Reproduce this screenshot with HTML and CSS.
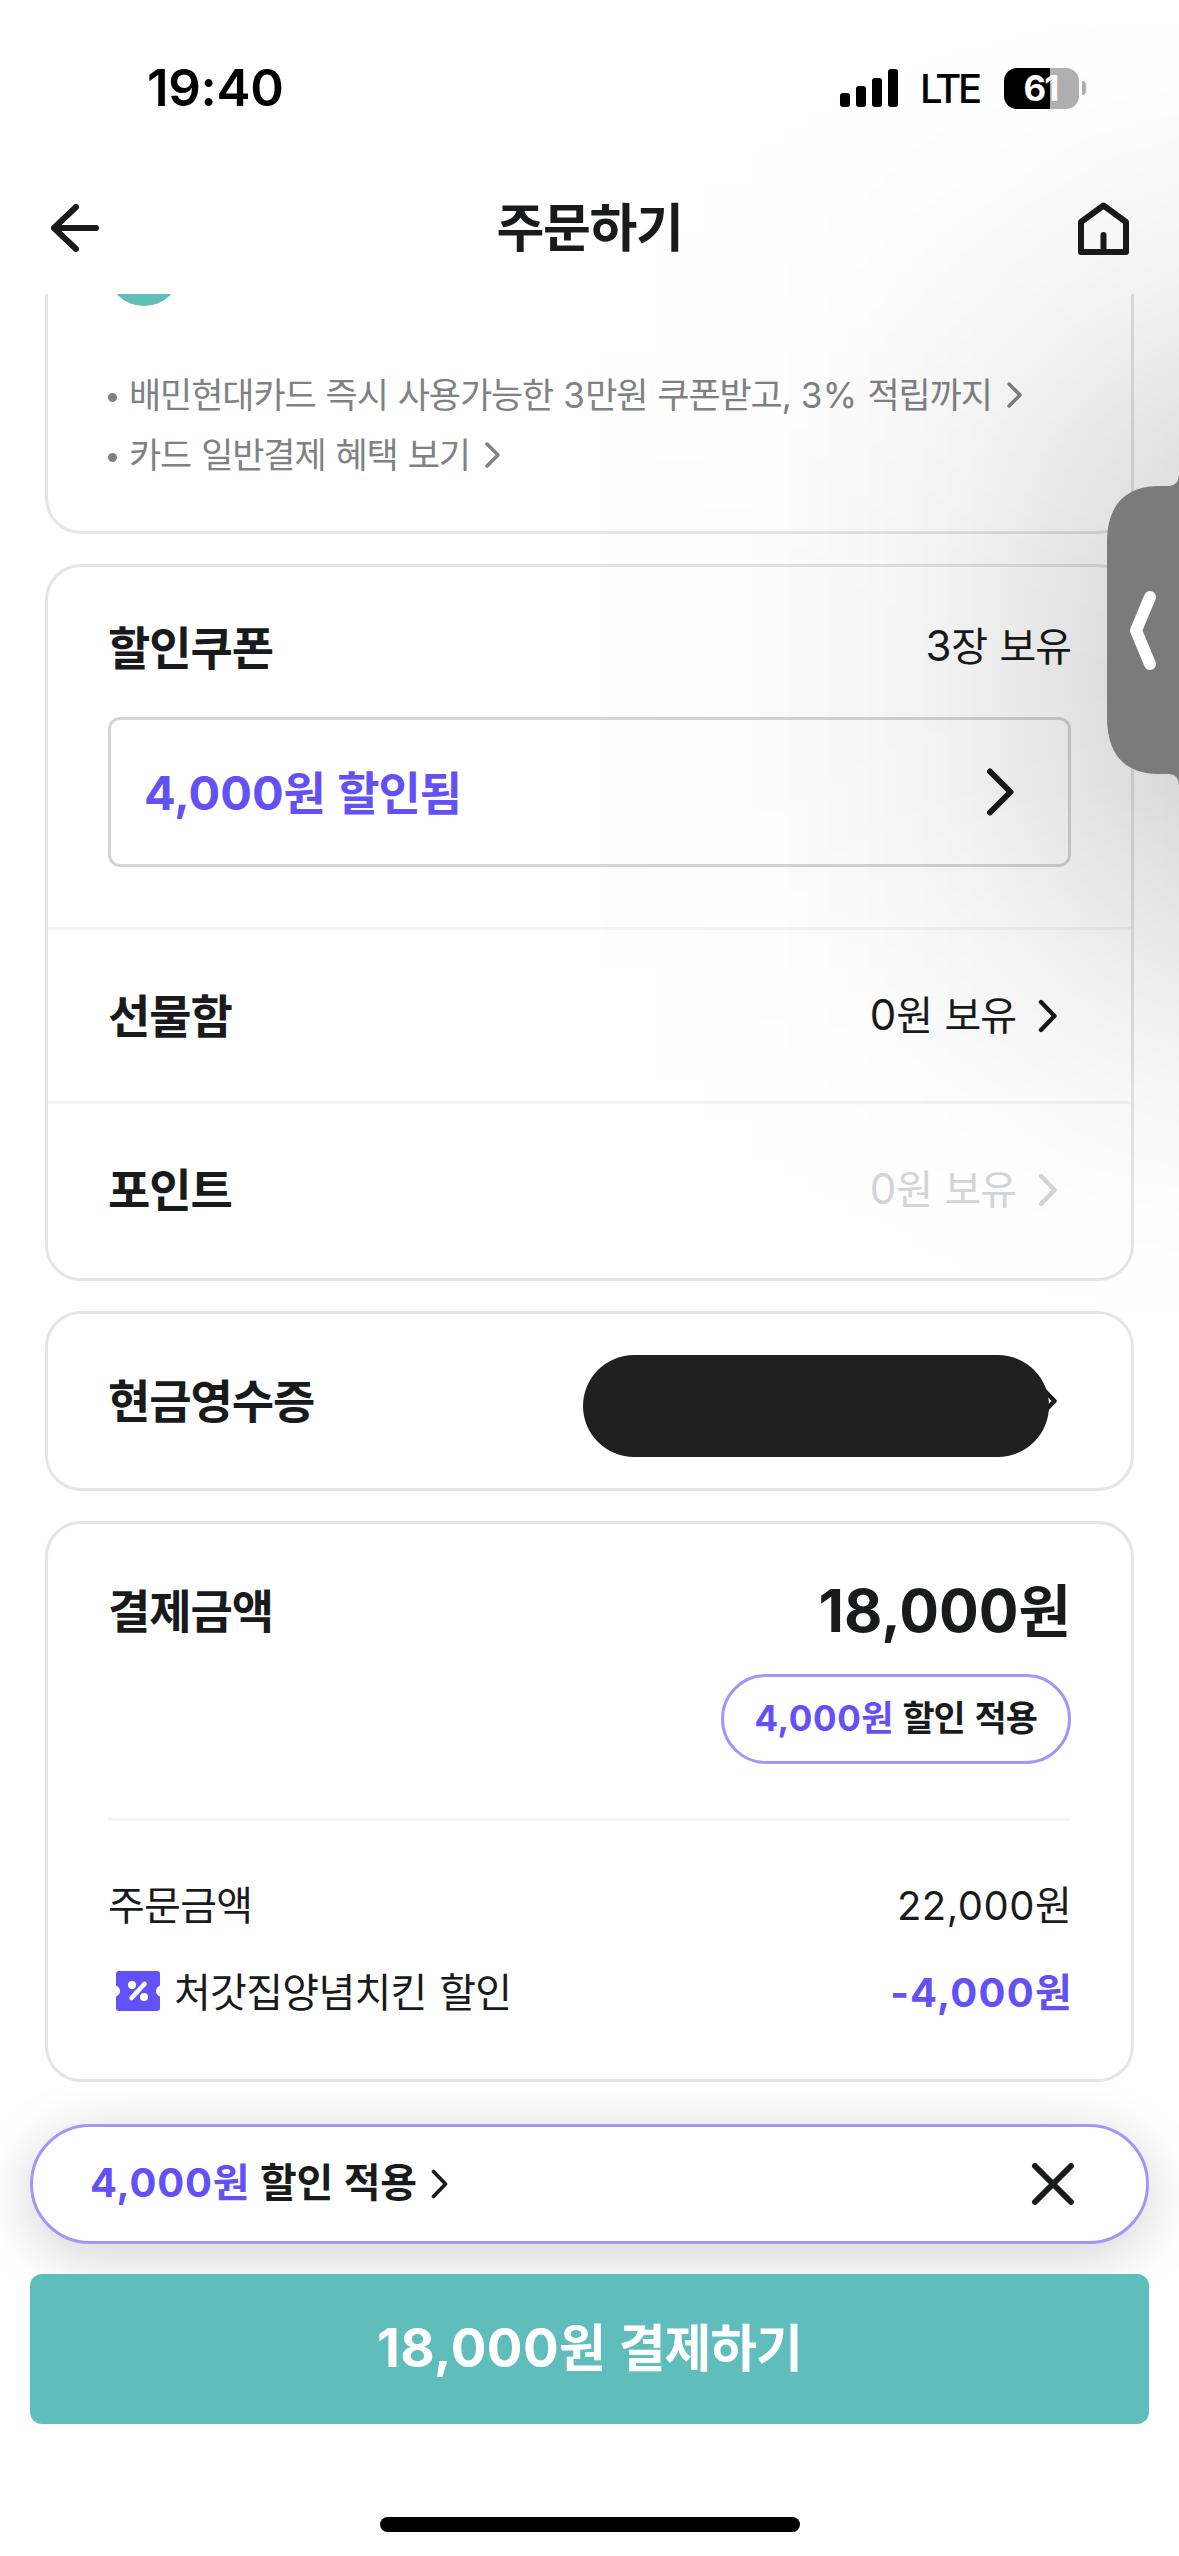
FILE: index.html
```html
<!DOCTYPE html>
<html lang="ko">
<head>
<meta charset="utf-8">
<title>주문하기</title>
<link rel="stylesheet" href="styles.css">
</head>
<body>
<div class="screen">
  <div class="status">
    <span class="status-time">19:40</span>
    <div class="status-right">
      <svg class="signal" width="58" height="38" viewBox="0 0 58 38"><rect x="0" y="24" width="10" height="14" rx="3"/><rect x="16" y="17" width="10" height="21" rx="3"/><rect x="32" y="9" width="10" height="29" rx="3"/><rect x="48" y="0" width="10" height="38" rx="3"/></svg>
      <span class="network">LTE</span>
      <div class="battery"><span class="battery-body">61</span><span class="battery-cap"></span></div>
    </div>
  </div>
  <header class="header">
    <svg width="60" height="60" viewBox="0 0 60 60" class="line-icon"><path d="M31 9 9 30 31 51M9 30H51"/></svg>
    <h1 class="title">주문하기</h1>
    <svg width="60" height="60" viewBox="0 0 60 60" class="line-icon house"><path d="M7 24 29.500 7.500 52 24V54H7ZM29.500 37V53"/></svg>
  </header>

  <main class="content">
    <section class="card card-method">
      <span class="radio-dot"></span>
      <ul class="notes">
        <li><span class="note-text">배민현대카드 즉시 사용가능한 <span class="num">3</span>만원 쿠폰받고, <span class="num">3%</span> 적립까지</span><svg width="16" height="26" viewBox="0 0 16 26"><path d="M2 2 13 13 2 24"/></svg></li>
        <li><span class="note-text">카드 일반결제 혜택 보기</span><svg width="16" height="26" viewBox="0 0 16 26"><path d="M2 2 13 13 2 24"/></svg></li>
      </ul>
    </section>

    <section class="card card-benefit">
      <div class="coupon">
        <div class="coupon-head"><h2 class="label">할인쿠폰</h2><span class="value"><span class="num">3</span>장 보유</span></div>
        <div class="coupon-box"><span class="coupon-text"><span class="num">4,000</span>원 할인됨</span><svg width="30" height="48" viewBox="0 0 30 48"><path d="M4 3.500 24.500 24 4 44.500"/></svg></div>
      </div>
      <div class="row"><h2 class="label">선물함</h2><span class="value"><span class="num">0</span>원 보유</span><svg class="chev" width="20" height="34" viewBox="0 0 20 34"><path d="M3 3 16.500 17 3 31"/></svg></div>
      <div class="row muted"><h2 class="label">포인트</h2><span class="value"><span class="num">0</span>원 보유</span><svg class="chev" width="20" height="34" viewBox="0 0 20 34"><path d="M3 3 16.500 17 3 31"/></svg></div>
    </section>

    <section class="card card-receipt">
      <div class="row"><h2 class="label">현금영수증</h2><svg class="chev" width="20" height="34" viewBox="0 0 20 34"><path d="M3 3 16.500 17 3 31"/></svg></div>
      <span class="redaction"></span>
    </section>

    <section class="card card-total">
      <div class="total-head"><h2 class="label">결제금액</h2><span class="total"><span class="num">18,000</span>원</span></div>
      <div class="badge"><span class="accent"><span class="num">4,000</span>원</span> 할인 적용</div>
      <div class="divider"></div>
      <div class="line"><span class="line-name">주문금액</span><span class="line-price"><span class="num">22,000</span>원</span></div>
      <div class="line line-discount">
        <svg class="ticket" width="44" height="40" viewBox="0 0 44 40"><path class="ticket-body" d="M3 0H41a3 3 0 0 1 3 3V14.500q-4 2-4 5.500t4 5.500V37a3 3 0 0 1-3 3H3a3 3 0 0 1-3-3V25.500q4-2 4-5.500T0 14.500V3A3 3 0 0 1 3 0Z"/><path class="ticket-slash" d="M15.500 27 28.500 13"/><circle cx="16" cy="14" r="4"/><circle cx="28" cy="26" r="4"/></svg>
        <span class="line-name">처갓집양념치킨 할인</span><span class="line-price accent"><span class="num">-4,000</span>원</span>
      </div>
    </section>
  </main>

  <footer class="footer">
    <div class="toast"><span class="toast-text"><span class="accent"><span class="num">4,000</span>원</span> 할인 적용</span><svg class="toast-chev" width="18" height="30" viewBox="0 0 18 30"><path d="M2.500 2.500 14.500 15 2.500 27.500"/></svg><svg class="close" width="44" height="44" viewBox="0 0 44 44"><path d="M4 4 40 40M40 4 4 40"/></svg></div>
    <div class="pay"><span class="pay-text"><span class="num">18,000</span>원 결제하기</span></div>
    <div class="home-bar"></div>
  </footer>

  <div class="glow"></div>
  <svg class="handle" width="72" height="310" viewBox="0 0 72 310"><path class="handle-body" d="M72 0Q71 11 62 11H50C18 12 0 30 0 68V242C0 280 18 298 50 299H62Q71 299 72 310Z"/><path class="handle-arrow" d="M43 122 29 155.500 43 189"/></svg>
</div>
</body>
</html>
```
FILE: styles.css
```css
* { box-sizing: border-box; }
body { margin: 0; background: #fff; }
h1, h2, ul { margin: 0; padding: 0; font-weight: 600; list-style: none; }
svg { flex: none; display: block; fill: none; stroke: currentColor; stroke-linecap: round; stroke-linejoin: round; }

.screen {
  position: relative;
  width: 1179px;
  height: 2556px;
  overflow: hidden;
  display: flex;
  flex-direction: column;
  background: #fff;
  color: #191a1c;
  font-family: "Inter", "Noto Sans CJK KR", sans-serif;
  white-space: nowrap;
}

.status {
  height: 168px;
  padding: 8px 93px 0 147px;
  display: flex;
  align-items: center;
  justify-content: space-between;
  color: #000;
}
.status-time { font-size: 51px; font-weight: 600; line-height: 60px; letter-spacing: -0.3px; }
.status-right { display: flex; align-items: center; }
.signal { fill: #000; stroke: none; }
.network { width: 60px; margin-left: 22px; font-size: 40px; font-weight: 500; line-height: 50px; letter-spacing: -3.5px; padding-top: 2px; }
.battery { margin-left: 24px; display: flex; align-items: center; gap: 3px; }
.battery-body {
  width: 75px; height: 41px; border-radius: 13px;
  background: linear-gradient(90deg, #000 61%, #b1b1b1 61%);
  color: #fff; font-size: 35px; font-weight: 700; line-height: 41px; text-align: center; letter-spacing: -2px; padding-right: 2px;
}
.battery-cap { width: 4px; height: 14px; border-radius: 0 4px 4px 0; background: #b1b1b1; }

.header {
  height: 126px;
  padding: 0 45px 6px;
  display: flex;
  align-items: center;
  justify-content: space-between;
}
.line-icon { stroke-width: 6; }
.title { font-size: 52px; line-height: 60px; letter-spacing: -1.4px; padding-top: 2px; }

.content {
  height: 1800px;
  padding: 0 45px;
  overflow: hidden;
  display: flex;
  flex-direction: column;
  gap: 30px;
}
.card { flex: none; position: relative; border: 3px solid #e4e5e6; border-radius: 36px; }

.card-method { height: 240px; border-top: 0; border-radius: 0 0 36px 36px; overflow: hidden; color: #808183; }
.radio-dot { display: block; width: 74px; height: 74px; margin: -62px 0 0 59px; border-radius: 50%; background: #5fbebb; }
.notes { padding: 59px 0 0 60px; font-weight: 400; font-size: 35px; line-height: 60px; letter-spacing: -1.1px; word-spacing: 1.2px; }
.notes .num { letter-spacing: 0.4px; }
.notes li { display: flex; align-items: center; }
.notes li::before { content: ""; width: 9px; height: 9px; margin: 5px 12px 0 0; border-radius: 50%; background: #808183; }
.notes svg { margin-left: 15px; stroke-width: 3.500; }

.card-benefit { height: 717px; }
.coupon { height: 360px; padding: 51px 60px 0; }
.coupon-head { height: 60px; display: flex; align-items: center; justify-content: space-between; }
.label { font-size: 46px; line-height: 60px; letter-spacing: -1.100px; }
.value { font-size: 40px; line-height: 60px; letter-spacing: -1px; word-spacing: 2px; }
.value .num { font-size: 42px; }
.coupon-head .value { margin-top: -4px; }
.coupon-box {
  height: 150px; margin-top: 39px; padding: 0 52px 0 34px;
  border: 3px solid #d4d5d6; border-radius: 12px;
  display: flex; align-items: center; justify-content: space-between;
  color: #6351f6;
}
.coupon-text { font-size: 46px; font-weight: 600; letter-spacing: -1.100px; word-spacing: 2px; padding-bottom: 5px; margin-left: -1px; }
.coupon-text .num { font-size: 47px; font-weight: 700; letter-spacing: 0; }
.coupon-box svg { color: #191a1c; stroke-width: 6; }
.row { height: 174px; padding: 0 73px 0 60px; border-top: 3px solid #f3f4f6; display: flex; align-items: center; }
.row .label { margin-right: auto; }
.chev { margin-left: 22px; stroke-width: 4.400; }
.muted .value, .muted .chev { color: #d3d5d7; }

.card-receipt { height: 180px; }
.card-receipt .row { border: 0; }
.redaction { position: absolute; left: 535px; top: 41px; width: 466px; height: 102px; border-radius: 51px; background: #202020; }

.card-total { height: 561px; padding: 0 60px; display: flex; flex-direction: column; }
.total-head { height: 90px; margin-top: 42px; display: flex; align-items: center; justify-content: space-between; }
.total { font-size: 57px; font-weight: 700; padding-bottom: 8px; }
.total .num { font-size: 59px; letter-spacing: 0; }
.badge {
  align-self: flex-end; height: 90px; margin-top: 18px; padding: 0 31px 0 30px;
  border: 3px solid #a296fa; border-radius: 45px;
  font-size: 35px; font-weight: 600; line-height: 82px; letter-spacing: -1px; word-spacing: 2px;
}
.badge .num { font-weight: 700; letter-spacing: 0.600px; }
.accent { color: #6351f6; }
.divider { height: 3px; margin: 54px 0 38px; background: #f3f5f8; }
.line { height: 87px; display: flex; align-items: center; font-size: 40px; letter-spacing: -0.700px; word-spacing: 2px; }
.line-name { margin-right: auto; }
.line-price .num { letter-spacing: 0.5px; }
.line-price.accent { font-weight: 600; }
.line-price.accent .num { font-weight: 700; letter-spacing: 1.200px; }
.ticket { margin: 3px 14px 0 8px; stroke: none; fill: #fff; }
.ticket-body { fill: #6351f6; }
.ticket-slash { stroke: #fff; stroke-width: 4.500; }
.num { letter-spacing: 0; }

.footer { margin-top: 30px; padding: 0 30px; display: flex; flex-direction: column; align-items: center; }
.toast {
  align-self: stretch; height: 120px; padding: 0 71px 0 57px;
  border: 3px solid #a296fa; border-radius: 60px; background: #fff;
  box-shadow: 0 12px 60px rgba(0, 0, 0, 0.180);
  display: flex; align-items: center;
}
.toast-text { font-size: 40px; font-weight: 600; letter-spacing: -0.300px; word-spacing: 1px; padding-bottom: 8px; }
.toast-text .num { font-weight: 700; letter-spacing: 0.800px; }
.toast-chev { margin: 0 auto 0 14px; stroke-width: 3.700; }
.close { stroke-width: 6; }
.pay {
  position: relative;
  align-self: stretch; height: 150px; margin-top: 30px; border-radius: 12px; background: #5fbebb;
  color: #fff; font-size: 51px; font-weight: 600; line-height: 148px; text-align: center; letter-spacing: -1.100px; word-spacing: 2px;
}
.pay .num { font-size: 53px; font-weight: 700; letter-spacing: 0.4px; }
.home-bar { width: 420px; height: 15px; margin-top: 93px; border-radius: 8px; background: #000; }

/* soft shade cast by the side tray, over the page */
.glow {
  position: absolute; right: 0; top: 0; width: 640px; height: 1340px; pointer-events: none;
  background: linear-gradient(270deg, rgba(0,0,0,.155) 0, rgba(0,0,0,.13) 72px, rgba(0,0,0,.105) 120px, rgba(0,0,0,.067) 200px, rgba(0,0,0,.036) 300px, rgba(0,0,0,.016) 400px, rgba(0,0,0,.006) 500px, transparent 600px);
  mask-image: linear-gradient(180deg, transparent 0, rgba(0,0,0,.05) 80px, rgba(0,0,0,.17) 190px, rgba(0,0,0,.37) 300px, rgba(0,0,0,.7) 430px, rgba(0,0,0,.92) 560px, #000 680px, rgba(0,0,0,.92) 790px, rgba(0,0,0,.7) 890px, rgba(0,0,0,.42) 1000px, rgba(0,0,0,.18) 1110px, rgba(0,0,0,.05) 1220px, transparent 1340px);
}
.handle { position: absolute; right: 0; top: 475px; stroke: none; }
.handle-body { fill: #7b7b7b; }
.handle-arrow { stroke: #fff; stroke-width: 12; }
```
